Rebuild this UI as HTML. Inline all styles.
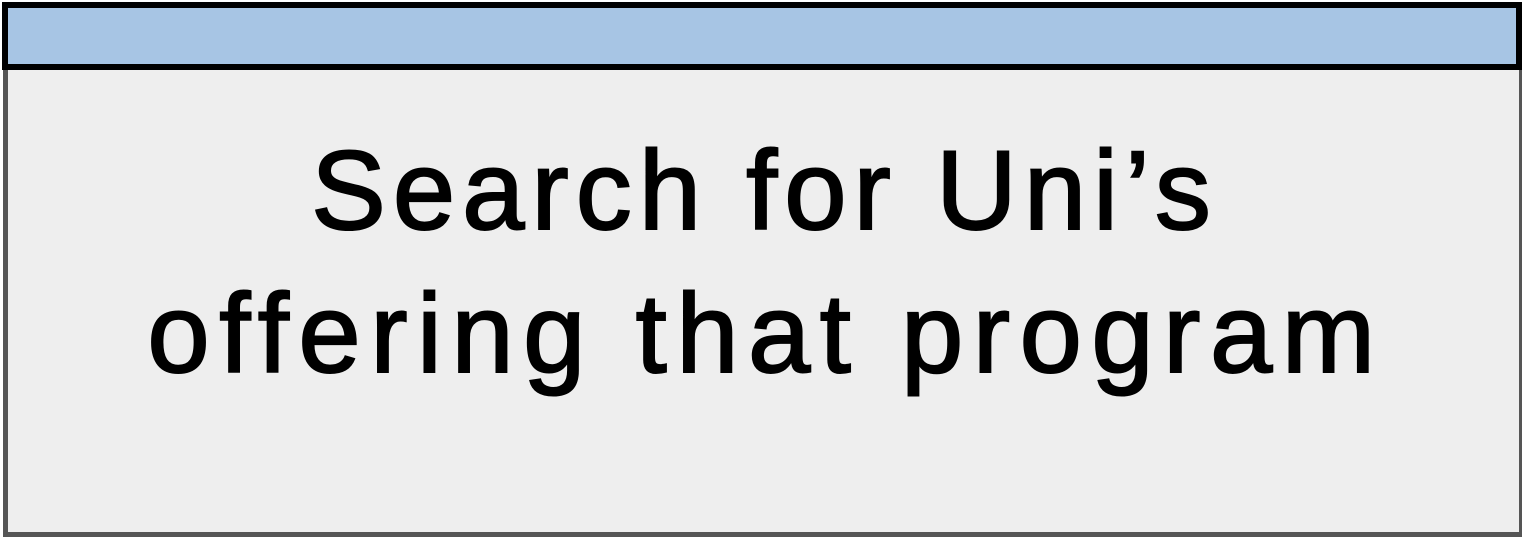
<!DOCTYPE html>
<html><head><style>
html,body{margin:0;padding:0;width:1522px;height:540px;background:#fff;overflow:hidden}
.hdr{position:absolute;left:2px;top:2px;width:1508px;height:56px;background:#a7c5e4;border:6px solid #000}
.body{position:absolute;left:3px;top:68px;width:1511px;height:464px;background:#eeeeee;border:5px solid #555;border-top:none;box-sizing:content-box}
.t{position:absolute;left:0;width:1522px;text-align:center;font-family:"Comic Sans MS","Liberation Sans",sans-serif;font-size:112px;color:#000;line-height:1;-webkit-text-stroke:2px #000}
</style></head><body>
<div class="body"></div>
<div class="hdr"></div>
<div class="t" style="top:135px;letter-spacing:7px;padding-left:7px;box-sizing:border-box">Search for Uni’s</div>
<div class="t" style="top:278px;letter-spacing:9.5px;padding-left:10px;box-sizing:border-box">offering that program</div>
</body></html>
